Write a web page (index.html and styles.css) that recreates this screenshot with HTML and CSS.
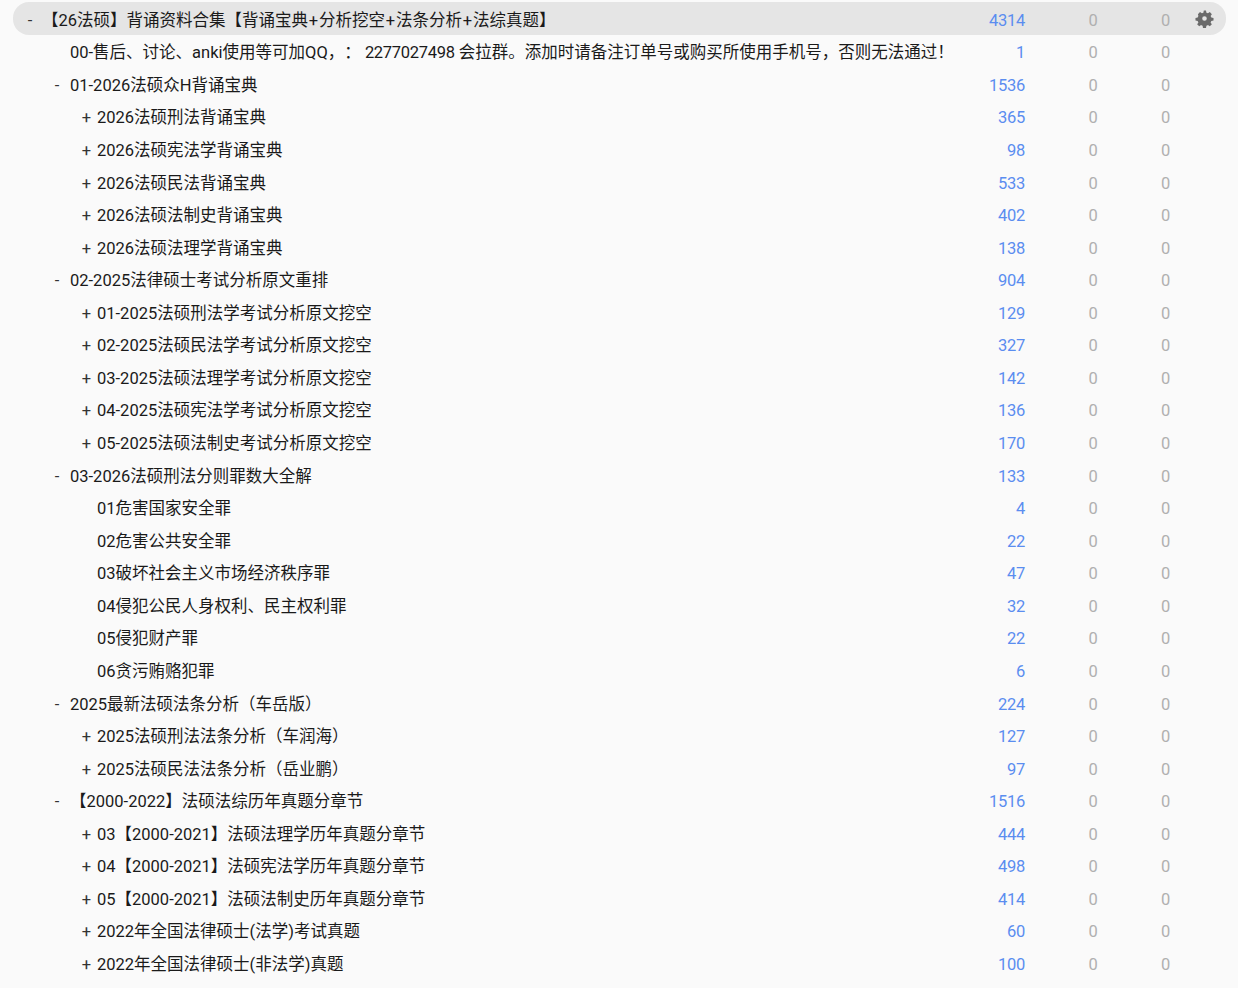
FILE: index.html
```html
<!DOCTYPE html>
<html lang="zh">
<head>
<meta charset="utf-8">
<title>Decks</title>
<link rel="stylesheet" href="styles.css">
</head>
<body>
<main class="tree">
<div class="row current"><div class="name l0"><span class="tog">-</span><span>【26法硕】背诵资料合集【背诵宝典<span class="plus">+</span>分析挖空<span class="plus">+</span>法条分析<span class="plus">+</span>法综真题】</span></div><div class="n due">4314</div><div class="n">0</div><div class="n">0</div><div class="opts"><svg viewBox="0 0 24 24" width="19" height="19"><path fill="#6a6a6a" fill-rule="evenodd" d="M13.900 2.500l.5 2.800c.7.200 1.300.500 1.900.9l2.400-1.600 2.600 2.600-1.600 2.400c.4.600.7 1.200.9 1.900l2.800.5v3.200l-2.800.5c-.2.700-.5 1.300-.9 1.900l1.600 2.400-2.600 2.600-2.400-1.600c-.6.400-1.200.700-1.900.9l-.5 2.800h-3.800l-.5-2.800c-.7-.2-1.300-.5-1.900-.9l-2.400 1.600-2.600-2.600 1.600-2.400c-.4-.6-.7-1.200-.9-1.900l-2.800-.5v-3.200l2.800-.5c.2-.7.500-1.300.9-1.900L3.700 7.200l2.600-2.600 2.400 1.600c.6-.4 1.200-.7 1.900-.9l.5-2.800zM12 9.800a2.900 2.900 0 1 0 0 5.800 2.900 2.900 0 0 0 0-5.800z" transform="translate(0 -.7)"/></svg></div></div>
<div class="row"><div class="name l1"><span class="tog"></span><span>00-售后、讨论、anki使用等可加QQ，： <span class="qq">2277027498</span> 会拉群。添加时请备注订单号或购买所使用手机号，否则无法通过！</span></div><div class="n due">1</div><div class="n">0</div><div class="n">0</div><div class="opts"></div></div>
<div class="row"><div class="name l1"><span class="tog">-</span><span>01-2026法硕众H背诵宝典</span></div><div class="n due">1536</div><div class="n">0</div><div class="n">0</div><div class="opts"></div></div>
<div class="row"><div class="name l2"><span class="tog">+</span><span>2026法硕刑法背诵宝典</span></div><div class="n due">365</div><div class="n">0</div><div class="n">0</div><div class="opts"></div></div>
<div class="row"><div class="name l2"><span class="tog">+</span><span>2026法硕宪法学背诵宝典</span></div><div class="n due">98</div><div class="n">0</div><div class="n">0</div><div class="opts"></div></div>
<div class="row"><div class="name l2"><span class="tog">+</span><span>2026法硕民法背诵宝典</span></div><div class="n due">533</div><div class="n">0</div><div class="n">0</div><div class="opts"></div></div>
<div class="row"><div class="name l2"><span class="tog">+</span><span>2026法硕法制史背诵宝典</span></div><div class="n due">402</div><div class="n">0</div><div class="n">0</div><div class="opts"></div></div>
<div class="row"><div class="name l2"><span class="tog">+</span><span>2026法硕法理学背诵宝典</span></div><div class="n due">138</div><div class="n">0</div><div class="n">0</div><div class="opts"></div></div>
<div class="row"><div class="name l1"><span class="tog">-</span><span>02-2025法律硕士考试分析原文重排</span></div><div class="n due">904</div><div class="n">0</div><div class="n">0</div><div class="opts"></div></div>
<div class="row"><div class="name l2"><span class="tog">+</span><span>01-2025法硕刑法学考试分析原文挖空</span></div><div class="n due">129</div><div class="n">0</div><div class="n">0</div><div class="opts"></div></div>
<div class="row"><div class="name l2"><span class="tog">+</span><span>02-2025法硕民法学考试分析原文挖空</span></div><div class="n due">327</div><div class="n">0</div><div class="n">0</div><div class="opts"></div></div>
<div class="row"><div class="name l2"><span class="tog">+</span><span>03-2025法硕法理学考试分析原文挖空</span></div><div class="n due">142</div><div class="n">0</div><div class="n">0</div><div class="opts"></div></div>
<div class="row"><div class="name l2"><span class="tog">+</span><span>04-2025法硕宪法学考试分析原文挖空</span></div><div class="n due">136</div><div class="n">0</div><div class="n">0</div><div class="opts"></div></div>
<div class="row"><div class="name l2"><span class="tog">+</span><span>05-2025法硕法制史考试分析原文挖空</span></div><div class="n due">170</div><div class="n">0</div><div class="n">0</div><div class="opts"></div></div>
<div class="row"><div class="name l1"><span class="tog">-</span><span>03-2026法硕刑法分则罪数大全解</span></div><div class="n due">133</div><div class="n">0</div><div class="n">0</div><div class="opts"></div></div>
<div class="row"><div class="name l2"><span class="tog"></span><span>01危害国家安全罪</span></div><div class="n due">4</div><div class="n">0</div><div class="n">0</div><div class="opts"></div></div>
<div class="row"><div class="name l2"><span class="tog"></span><span>02危害公共安全罪</span></div><div class="n due">22</div><div class="n">0</div><div class="n">0</div><div class="opts"></div></div>
<div class="row"><div class="name l2"><span class="tog"></span><span>03破坏社会主义市场经济秩序罪</span></div><div class="n due">47</div><div class="n">0</div><div class="n">0</div><div class="opts"></div></div>
<div class="row"><div class="name l2"><span class="tog"></span><span>04侵犯公民人身权利、民主权利罪</span></div><div class="n due">32</div><div class="n">0</div><div class="n">0</div><div class="opts"></div></div>
<div class="row"><div class="name l2"><span class="tog"></span><span>05侵犯财产罪</span></div><div class="n due">22</div><div class="n">0</div><div class="n">0</div><div class="opts"></div></div>
<div class="row"><div class="name l2"><span class="tog"></span><span>06贪污贿赂犯罪</span></div><div class="n due">6</div><div class="n">0</div><div class="n">0</div><div class="opts"></div></div>
<div class="row"><div class="name l1"><span class="tog">-</span><span>2025最新法硕法条分析（车岳版）</span></div><div class="n due">224</div><div class="n">0</div><div class="n">0</div><div class="opts"></div></div>
<div class="row"><div class="name l2"><span class="tog">+</span><span>2025法硕刑法法条分析（车润海）</span></div><div class="n due">127</div><div class="n">0</div><div class="n">0</div><div class="opts"></div></div>
<div class="row"><div class="name l2"><span class="tog">+</span><span>2025法硕民法法条分析（岳业鹏）</span></div><div class="n due">97</div><div class="n">0</div><div class="n">0</div><div class="opts"></div></div>
<div class="row"><div class="name l1"><span class="tog">-</span><span>【2000-2022】法硕法综历年真题分章节</span></div><div class="n due">1516</div><div class="n">0</div><div class="n">0</div><div class="opts"></div></div>
<div class="row"><div class="name l2"><span class="tog">+</span><span>03【2000-2021】法硕法理学历年真题分章节</span></div><div class="n due">444</div><div class="n">0</div><div class="n">0</div><div class="opts"></div></div>
<div class="row"><div class="name l2"><span class="tog">+</span><span>04【2000-2021】法硕宪法学历年真题分章节</span></div><div class="n due">498</div><div class="n">0</div><div class="n">0</div><div class="opts"></div></div>
<div class="row"><div class="name l2"><span class="tog">+</span><span>05【2000-2021】法硕法制史历年真题分章节</span></div><div class="n due">414</div><div class="n">0</div><div class="n">0</div><div class="opts"></div></div>
<div class="row"><div class="name l2"><span class="tog">+</span><span>2022年全国法律硕士(法学)考试真题</span></div><div class="n due">60</div><div class="n">0</div><div class="n">0</div><div class="opts"></div></div>
<div class="row"><div class="name l2"><span class="tog">+</span><span>2022年全国法律硕士(非法学)真题</span></div><div class="n due">100</div><div class="n">0</div><div class="n">0</div><div class="opts"></div></div>
</main>
</body>
</html>
```

FILE: styles.css
```css
html, body {
  margin: 0;
  height: 100%;
  overflow: hidden;
  background: #fafafa;
}
body {
  font-family: Roboto, "Noto Sans CJK SC", sans-serif;
  font-size: 16.5px;
  color: #1a1a1a;
  text-spacing-trim: space-all;
}
.tree {
  padding: 4.45px 12px 0 13px;
  position: relative;
  z-index: 0;
}
.row {
  display: grid;
  grid-template-columns: 1fr 72.500px 72.500px 72.500px 56px;
  height: 32.57px;
  align-items: center;
  line-height: 24px;
  white-space: nowrap;
}
.current {
  position: relative;
}
.current::before {
  content: "";
  position: absolute;
  z-index: -1;
  top: -2.45px;
  left: 0;
  right: 0;
  height: 33px;
  background: #e5e5e5;
  border-radius: 16px;
}
.name {
  display: flex;
  min-width: 0;
}
.tog {
  flex: none;
  width: 20px;
  text-align: center;
  color: #333;
}
.l0 { padding-left: 7px; gap: 2px; }
.l1 { padding-left: 34px; }
.l1 .tog { margin-right: 3px; }
.l2 { padding-left: 63px; }
.l2 .tog { width: 21px; }
.plus { margin: 0 .8px; }
.qq { letter-spacing: -.3px; }
.n {
  text-align: right;
  color: #b0b0b0;
  letter-spacing: -.26px;
}
.due { color: #5a8df0; }
.opts {
  display: flex;
  align-items: center;
  padding-left: 25px;
  margin-top: -4.9px;
}
```
